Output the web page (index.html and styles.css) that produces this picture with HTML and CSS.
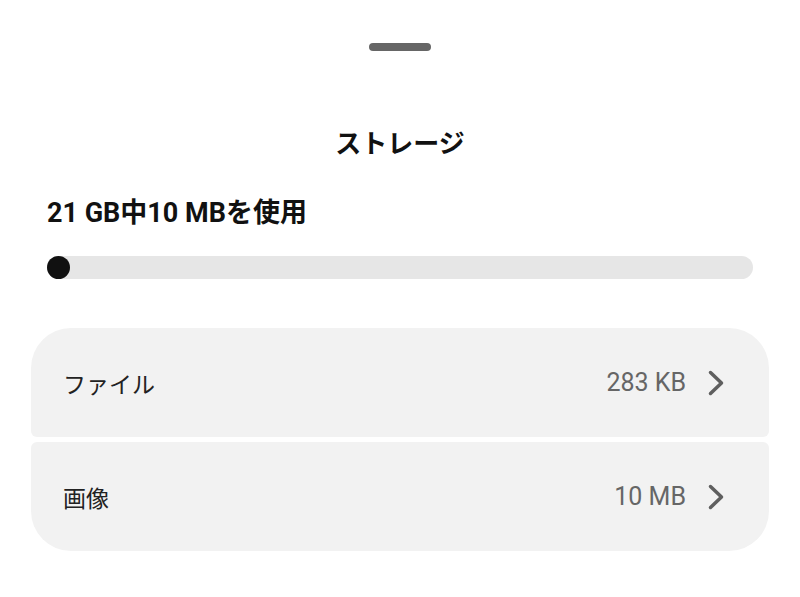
FILE: index.html
```html
<!DOCTYPE html>
<html lang="ja">
<head>
<meta charset="utf-8">
<link rel="stylesheet" href="styles.css">
</head>
<body>
<div class="sheet">
  <div class="handle"></div>
  <h1 class="title">ストレージ</h1>
  <div class="usage">21 GB中10 MBを使用</div>
  <div class="bar"><div class="dot"></div></div>
  <div class="list">
    <div class="row row-top">
      <span class="label">ファイル</span>
      <span class="value">283 KB</span>
      <svg class="chev" width="16" height="26" viewBox="0 0 16 26"><polyline points="2.5,2.5 13.5,13 2.5,23.5" fill="none" stroke="#5f5f5f" stroke-width="3.5" stroke-linecap="round" stroke-linejoin="round"/></svg>
    </div>
    <div class="row row-bottom">
      <span class="label">画像</span>
      <span class="value">10 MB</span>
      <svg class="chev" width="16" height="26" viewBox="0 0 16 26"><polyline points="2.5,2.5 13.5,13 2.5,23.5" fill="none" stroke="#5f5f5f" stroke-width="3.5" stroke-linecap="round" stroke-linejoin="round"/></svg>
    </div>
  </div>
</div>
</body>
</html>
```

FILE: styles.css
```css
html, body {
  margin: 0;
  padding: 0;
  background: #ffffff;
}
body {
  font-family: Roboto, "Noto Sans CJK JP", sans-serif;
  color: #111;
}
.sheet {
  display: flex;
  flex-direction: column;
  padding: 0 31px;
}
.handle {
  align-self: center;
  width: 62px;
  height: 8px;
  border-radius: 4px;
  background: #666666;
  margin-top: 43px;
}
.title {
  margin: 73px 0 0;
  text-align: center;
  font-family: "Noto Sans CJK JP", sans-serif;
  font-weight: 700;
  font-size: 26px;
  line-height: 36px;
  color: #111;
}
.usage {
  margin: 37px 16px 0;
  font-family: Roboto, "Noto Sans CJK JP", sans-serif;
  font-weight: 700;
  font-size: 27px;
  line-height: 32px;
  color: #111;
}
.bar {
  margin: 27px 16px 0;
  height: 23px;
  border-radius: 12px;
  background: #e6e6e6;
  display: flex;
}
.dot {
  width: 23px;
  height: 23px;
  border-radius: 50%;
  background: #111;
}
.list {
  margin-top: 49px;
  display: flex;
  flex-direction: column;
  gap: 5px;
}
.row {
  height: 109px;
  background: #f2f2f2;
  display: flex;
  align-items: center;
  padding: 0 45px 0 32px;
}
.row-top {
  border-radius: 40px 40px 6px 6px;
}
.row-bottom {
  border-radius: 6px 6px 40px 40px;
}
.label {
  flex: 1;
  font-family: "Noto Sans CJK JP", sans-serif;
  font-size: 23px;
  color: #222;
}
.value {
  font-family: Roboto, "Noto Sans CJK JP", sans-serif;
  font-size: 25px;
  color: #666;
  margin-right: 22px;
}
.chev {
  display: block;
}
```
